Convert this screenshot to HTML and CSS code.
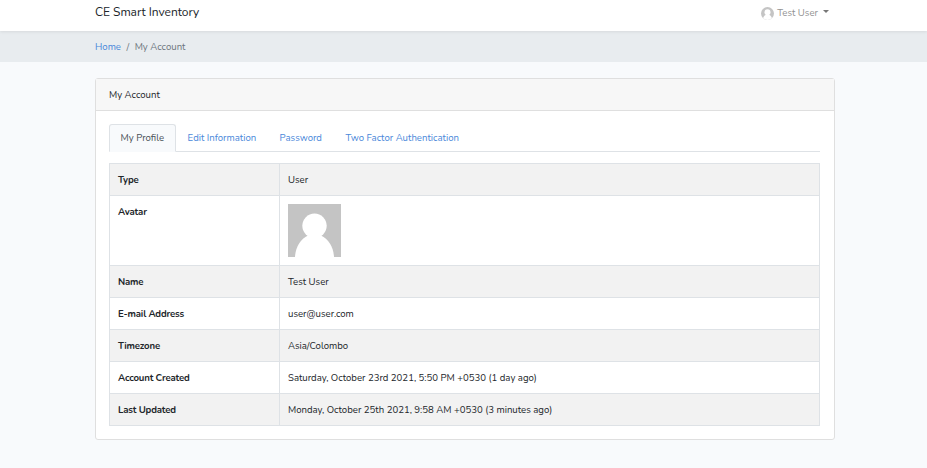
FILE: index.html
```html
<!DOCTYPE html>
<html lang="en">
<head>
<meta charset="utf-8">
<title>My Account</title>
<link rel="stylesheet" href="styles.css">
</head>
<body>
<nav class="navbar">
  <div class="container navbar-inner">
    <a class="brand">CE Smart Inventory</a>
    <a class="user-menu">
      <svg class="user-icon" viewBox="0 0 53 53"><rect width="53" height="53" fill="#c4c4c4"/><circle cx="26.5" cy="21.8" r="12.2" fill="#fff"/><path d="M7 53C7.500 43 12.500 35 20 31.500h13c7.500 3.500 12.500 11.500 13 21.500z" fill="#fff"/></svg>
      <span class="user-name">Test User</span>
      <span class="caret"></span>
    </a>
  </div>
</nav>
<div class="breadcrumb">
  <div class="container crumbs"><a class="crumb-home">Home</a><span class="slash">/</span><span class="crumb-current">My Account</span></div>
</div>
<main class="container card">
  <div class="card-header"><span>My Account</span></div>
  <div class="card-body">
    <div class="tabs">
      <a class="tab active"><span>My Profile</span></a>
      <a class="tab tab-edit"><span>Edit Information</span></a>
      <a class="tab tab-password"><span>Password</span></a>
      <a class="tab tab-two"><span>Two Factor Authentication</span></a>
    </div>
    <table>
      <tr><th>Type</th><td><span>User</span></td></tr>
      <tr class="avatar-row"><th>Avatar</th><td><svg class="avatar" viewBox="0 0 53 53"><rect width="53" height="53" fill="#c4c4c4"/><circle cx="26.5" cy="21.8" r="12.2" fill="#fff"/><path d="M7 53C7.500 43 12.500 35 20 31.500h13c7.500 3.500 12.500 11.500 13 21.500z" fill="#fff"/></svg></td></tr>
      <tr><th>Name</th><td>Test User</td></tr>
      <tr><th>E-mail Address</th><td>user@user.com</td></tr>
      <tr><th>Timezone</th><td>Asia/Colombo</td></tr>
      <tr><th>Account Created</th><td class="date">Saturday, October 23rd 2021, 5:50 PM +0530 (1 day ago)</td></tr>
      <tr><th>Last Updated</th><td class="date">Monday, October 25th 2021, 9:58 AM +0530 (3 minutes ago)</td></tr>
    </table>
  </div>
</main>
</body>
</html>
```
FILE: styles.css
```css
* { box-sizing: border-box; }
body {
  margin: 0;
  background: #f8fafc;
  color: #212529;
  font: 9.6px/15px Nunito, Lato, sans-serif;
  overflow: hidden;
}
.container { width: 740px; margin-left: 95px; }
.navbar {
  position: relative;
  height: 31px;
  background: #fff;
  box-shadow: 0 1px 3px rgba(0, 0, 0, .08);
}
.navbar-inner { display: flex; justify-content: space-between; height: 25px; align-items: center; }
.brand { font-size: 12px; letter-spacing: -.04px; }
.user-menu { display: flex; align-items: center; color: #929292; padding: 0 6px 0 0; }
.user-icon { width: 13px; height: 13px; border-radius: 50%; margin: 2px 3px 0 0; }
.user-name { margin-top: -1px; }
.caret { border: 3px solid transparent; border-top-color: #777; border-bottom: 0; margin-left: 5px; margin-top: -3px; }
.breadcrumb { height: 31px; background: #e8ecef; }
.crumbs { display: flex; align-items: center; height: 30px; color: #6c757d; }
.slash { margin: 0 5.5px; }
.crumb-home, .tab { color: #4a88da; }
.card { height: 362px; margin-top: 16px; background: #fff; border: 1px solid #dfdfdf; border-radius: 3px; }
.card-header { height: 32px; padding: 8px 13px; background: #f7f7f7; border-bottom: 1px solid #dfdfdf; }
.card-body { padding: 13px; }
.tabs { display: flex; height: 28px; width: 711px; border-bottom: 1px solid #dee2e6; }
.tab { height: 28px; padding: 5px 10.6px; border: 1px solid transparent; white-space: nowrap; }
.active { width: 67px; color: #495057; background: #f8fafc; border-color: #dee2e6; border-bottom-color: #f8fafc; border-radius: 3px 3px 0 0; }
.tab-edit { width: 92px; }
.tab-password { width: 66px; }
table { width: 711px; margin-top: 11px; border-collapse: collapse; table-layout: fixed; }
tr { height: 32px; }
th, td { padding: 8px; border: 1px solid #dee2e6; vertical-align: top; text-align: left; }
th { width: 170px; font-weight: 700; letter-spacing: -.17px; }
tr:nth-child(odd) { background: #f2f2f2; }
.avatar-row { height: 70px; }
.avatar { display: block; width: 53px; height: 53px; }
```
